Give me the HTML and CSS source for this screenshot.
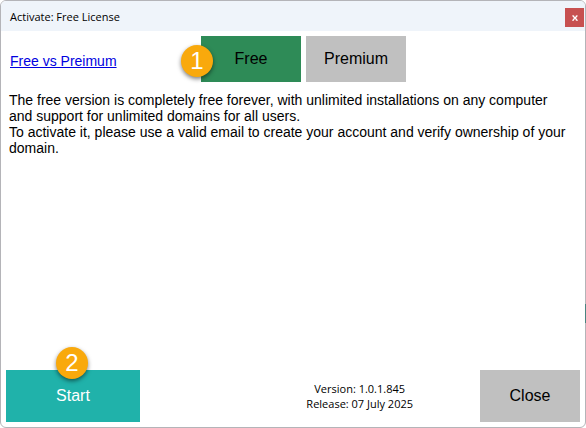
FILE: index.html
```html
<!DOCTYPE html>
<html lang="en">
<head>
  <meta charset="UTF-8" />
  <meta name="viewport" content="width=device-width, initial-scale=1.0"/>
  <title>Activate: Free License</title>
  <link rel="stylesheet" href="styles.css">
</head>
<body>

  <div class="window">
    <header class="titlebar">
      <h1>Activate: Free License</h1>
      <button class="close-x" aria-label="Close window">
        <svg width="8" height="8" viewBox="0 0 8 8" fill="none" stroke="#fff">
          <path d="M2 2L6 6M6 2L2 6" stroke-width="1.3"/>
          <path d="M1 1.8H3.2M4.8 1.8H6.8M1 6.4H3M4.8 6.4H7" stroke-width="0.7"/>
        </svg>
      </button>
    </header>

    <main>
      <!-- License type -->
      <div class="license">
        <a href="#">Free vs Preimum</a>
        <div class="tabs">
          <button class="tab active">Free</button>
          <button class="tab">Premium</button>
          <span class="badge badge-left">1</span>
        </div>
      </div>

      <p class="message">
        The free version is completely free forever, with unlimited installations on any computer<br/>
        and support for unlimited domains for all users.<br/>
        To activate it, please use a valid email to create your account and verify ownership of your
        domain.
      </p>
    </main>

    <footer>
      <div class="start-wrap">
        <button class="start">Start</button>
        <span class="badge badge-top">2</span>
      </div>
      <p class="version">Version: 1.0.1.845<br/>Release: 07 July 2025</p>
      <button class="close">Close</button>
    </footer>
  </div>

</body>
</html>
```

FILE: styles.css
```css
* {
  box-sizing: border-box;
}
body {
  font-family: "Liberation Sans", Arial, sans-serif;
  font-size: 14px;
  color: #000;
  background-color: #fff;
  margin: 0;
}
button {
  font-family: inherit;
  font-size: 16px;
  color: #000;
  border: none;
  border-radius: 0;
  padding: 0;
}
.window {
  position: relative;
  display: flex;
  flex-direction: column;
  min-height: 100vh;
  border: 1px solid #b4b4b8;
  border-radius: 6px;
}
/* edge of the panel behind the window */
.window::after {
  content: "";
  position: absolute;
  right: -1px;
  bottom: 104px;
  width: 1px;
  height: 19px;
  background-color: #4a8480;
}
.titlebar {
  display: flex;
  align-items: center;
  justify-content: space-between;
  height: 30px;
  padding-left: 9px;
  padding-right: 1px;
  background-color: #eff4fa;
  border-radius: 5px 5px 0 0;
}
.titlebar h1 {
  margin: 0;
  font-family: "Open Sans", "Noto Sans", sans-serif;
  font-size: 11px;
  font-weight: normal;
}
.close-x {
  display: flex;
  align-items: center;
  justify-content: center;
  width: 19px;
  height: 19px;
  margin-top: 3px;
  background-color: #c75050;
}
main {
  flex: 1;
}
.license {
  display: flex;
  align-items: center;
  padding: 5px 8px 0 9px;
}
.license a {
  width: 191px;
  padding-top: 4px;
  color: #0000e0;
}
.tabs {
  position: relative;
  display: flex;
  gap: 5px;
}
.tab {
  width: 100px;
  height: 46px;
  background-color: #c0c0c0;
}
.tab.active {
  background-color: #2e8b57;
}
.badge {
  position: absolute;
  width: 32px;
  height: 32px;
  border-radius: 50%;
  background-color: #f9a90c;
  box-shadow: 0 2px 4px rgba(0,0,0,0.5);
  color: #fff;
  font-size: 24px;
  line-height: 32px;
  text-align: center;
}
.badge-left {
  left: -20px;
  top: 9px;
}
.badge-top {
  left: 50px;
  top: -23px;
}
.message {
  margin: 10px 8px;
  line-height: 16px;
}
footer {
  display: flex;
  align-items: center;
  padding: 5px;
}
.start-wrap {
  position: relative;
  display: flex;
}
.start {
  width: 134px;
  height: 52px;
  background-color: #20b2aa;
  color: #fff;
}
.version {
  margin: 0 67px 0 auto;
  font-family: "Open Sans", "Noto Sans", sans-serif;
  font-size: 11px;
  line-height: 15px;
  text-align: center;
}
.close {
  width: 100px;
  height: 52px;
  background-color: #c0c0c0;
}
```
